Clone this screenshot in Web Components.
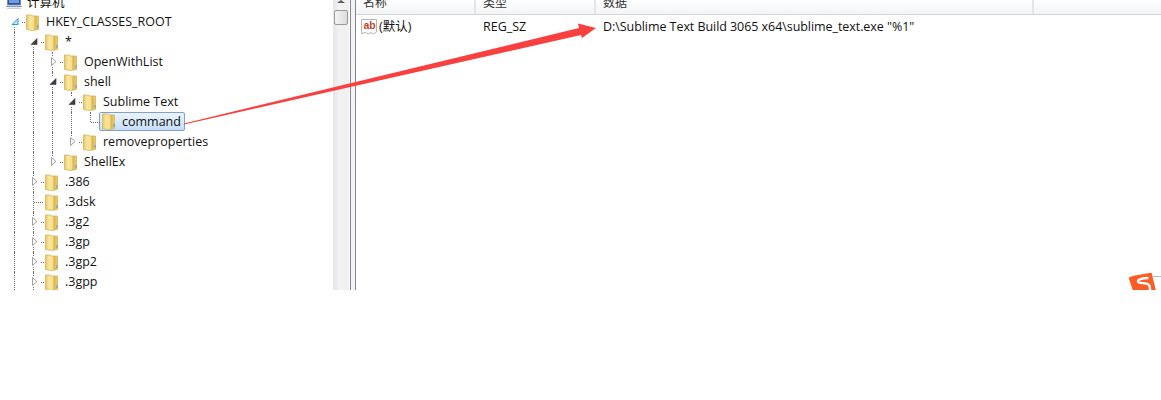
<!DOCTYPE html>
<html>
<head>
<meta charset="utf-8">
<style>
  html, body { margin: 0; padding: 0; background: #fff; }
</style>
</head>
<body>
<template id="folder-tpl">
  <svg width="13" height="17" viewBox="0 0 13 17">
    <defs>
      <linearGradient id="fg" x1="0" y1="0" x2="1" y2="0">
        <stop offset="0" stop-color="#e8c566"/>
        <stop offset="0.3" stop-color="#f8e6a0"/>
        <stop offset="0.58" stop-color="#f6e08e"/>
        <stop offset="0.72" stop-color="#dcb650"/>
        <stop offset="1" stop-color="#eccd72"/>
      </linearGradient>
    </defs>
    <path d="M.5 1h5l1 1h6v13.500l-6 1-6-1z" fill="url(#fg)" stroke="#d6b45a" stroke-width=".8"/>
    <path d="M11.500 11h1v3h-1z" fill="#4d9fd6"/>
  </svg>
</template>

<script>
const ROW_STEP = 19;

// one row of the registry tree. guides = list of levels that carry a vertical dotted line
class RegRow extends HTMLElement {
    constructor() {
        super();
        this.attachShadow({ mode: "open" });
    }

    connectedCallback() {
        const guides = (this.getAttribute("guides") || "").split(",").filter(Boolean);
        const level = Number(this.getAttribute("level") || 0);
        const exp = this.getAttribute("exp") || "none";
        const selected = this.hasAttribute("selected");
        const line = this.getAttribute("line") || "";

        let cells = "";
        for (let i = 0; i < level; i++) {
            const cls = guides.includes(String(i)) ? "cell guide" : "cell";
            cells += `<span class="${cls}"></span>`;
        }
        let mark = "";
        if (exp === "closed") {
            mark = `<svg class="tri" width="9" height="11" viewBox="0 0 9 11"><path d="M3.500 1.500l4.500 4-4.500 4z" fill="#fff" stroke="#a0a0a0"/></svg>`;
        } else if (exp === "open") {
            mark = `<svg class="tri" width="9" height="11" viewBox="0 0 9 11"><path d="M2 8.500h6V2.500z" fill="#3c3c3c" stroke="#3c3c3c" stroke-width=".6"/></svg>`;
        } else if (exp === "root") {
            mark = `<svg class="tri" width="9" height="11" viewBox="0 0 9 11"><path d="M2 8.500h6V2.500z" fill="#bfe6f8" stroke="#26a0da"/></svg>`;
        }

        this.shadowRoot.innerHTML = `
          <style>
            :host { display: flex; height: 20px; align-items: center; padding-left: 5px; white-space: nowrap; }
            .cell { position: relative; display: block; width: ${ROW_STEP}px; height: 20px; flex: none; }
            .guide::before, .stem::before, .stem-up::before {
              content: ""; position: absolute; left: 9px; width: 0;
              border-left: 1px dotted #6d6d6d;
            }
            .guide::before { top: 0; bottom: 0; }
            .stem::before { top: 0; bottom: 0; }
            .stem-up::before { top: 0; height: 10px; }
            .stem-down::before { content: ""; position: absolute; left: 9px; top: 15px; bottom: 0; border-left: 1px dotted #6d6d6d; }
            .hook-line { position: absolute; left: 10px; top: 10px; width: 9px; border-top: 1px dotted #6d6d6d; }
            .tri { position: absolute; left: 5px; top: 4px; background: #fff; }
            .tip { position: absolute; left: 17px; top: 10px; width: 3px; border-top: 1px dotted #6d6d6d; }
            .node { display: flex; align-items: center; flex: none; margin-left: 2px; height: 20px; }
            .node svg { display: block; margin-right: 7px; }
            .node.sel {
              box-sizing: border-box; height: 19px; align-self: flex-start; margin-left: -1px; padding: 0 3px 0 2px;
              border: 1px solid #7da2ce; border-radius: 2px;
              background: linear-gradient(#ebf4fd, #c6def7);
            }
            .label { color: #111; font: 12.500px/20px "Open Sans", "Noto Sans CJK SC", sans-serif; }
          </style>
          ${cells}
          <span class="cell ${line}">
            ${exp === "none" ? "" : mark + '<span class="tip"></span>'}
            ${this.hasAttribute("hook") ? '<span class="hook-line"></span>' : ""}
          </span>
          <span class="node ${selected ? "sel" : ""}">
            <span class="ico"></span>
            <span class="label"><slot></slot></span>
          </span>
        `;
        const ico = this.shadowRoot.querySelector(".ico");
        ico.appendChild(document.getElementById("folder-tpl").content.cloneNode(true));
    }
}

class RegTree extends HTMLElement {
    constructor() {
        super();
        this.attachShadow({ mode: "open" }).innerHTML = `
          <style>
            :host { display: block; width: 333px; flex: none; overflow: hidden; height: 290px; }
            .inner { margin-top: -8px; }
            .pc { display: flex; align-items: center; height: 20px; padding-left: 6px; gap: 5px;
                  font: 12.500px/20px "Noto Sans CJK SC", sans-serif; color: #111; }
          </style>
          <div class="inner">
            <div class="pc">
              <svg width="16" height="16" viewBox="0 0 16 16"><rect x="1.500" y="0" width="13" height="11" fill="#2c4f9e" stroke="#7f8c9c"/><rect x="3" y="2" width="10" height="7" fill="#6f9be0"/><path d="M0 12h16v1H0z" fill="#8aa0b8"/><path d="M1 13.500h14v1.500H1z" fill="#c6d2de"/></svg>
              <span>计算机</span>
            </div>
            <slot></slot>
          </div>
        `;
    }
}

class ScrollTrack extends HTMLElement {
    constructor() {
        super();
        this.attachShadow({ mode: "open" }).innerHTML = `
          <style>
            :host { display: block; width: 16px; flex: none; height: 290px; background: linear-gradient(90deg, #e6e6e6, #f2f2f2 40%, #f0f0f0); position: relative; }
            .thumb { position: absolute; left: 1px; right: 1px; top: 10px; height: 15px; box-sizing: border-box;
                     border: 1px solid #9a9a9a; border-radius: 2px; background: linear-gradient(90deg, #f3f3f3, #dcdcdc); }
            .up { position: absolute; left: 4px; top: 0; width: 0; height: 0; border: 4px solid transparent; border-top: 0; border-bottom: 3px solid #5a5a5a; }
          </style>
          <div class="up"></div>
          <div class="thumb"></div>
        `;
    }
}

class SplitBar extends HTMLElement {
    constructor() {
        super();
        this.attachShadow({ mode: "open" }).innerHTML = `
          <style>
            :host { display: block; width: 6px; flex: none; height: 290px; box-sizing: border-box; margin-left: 1px;
                    border-left: 1px solid #828790; border-right: 1px solid #828790; background: #f4f4f4; }
          </style>
        `;
    }
}

class HeadCell extends HTMLElement {
    constructor() {
        super();
        this.attachShadow({ mode: "open" }).innerHTML = `
          <style>
            :host { display: block; box-sizing: border-box; height: 14px; flex: none; overflow: hidden; padding-left: 7px;
                    border-right: 2px solid #e3e5e8; width: var(--w, auto);
                    font: 12px/12px "Noto Sans CJK SC", sans-serif; color: #333; }
            span { display: block; margin-top: -4px; }
          </style>
          <span><slot></slot></span>
        `;
    }
}

class ValueList extends HTMLElement {
    constructor() {
        super();
        this.attachShadow({ mode: "open" }).innerHTML = `
          <style>
            :host { display: block; flex: 1; height: 290px; overflow: hidden; background: #fff; }
            .head { display: flex; background: linear-gradient(#fff, #f3f4f6); border-bottom: 1px solid #d5d5d5; height: 14px; }
            .row { display: flex; align-items: center; height: 22px; margin-top: 1px;
                   font: 12.500px/20px "Open Sans", "Noto Sans CJK SC", sans-serif; color: #111; white-space: nowrap; }
            .name { display: flex; align-items: center; width: 127px; padding-left: 5px; box-sizing: border-box; flex: none; }
            .type { width: 120px; flex: none; }
            .data { letter-spacing: -0.06px; }
          </style>
          <div class="head">
            <head-cell style="--w:120px">名称</head-cell>
            <head-cell style="--w:120px">类型</head-cell>
            <head-cell style="--w:438px">数据</head-cell>
          </div>
          <div class="row">
            <span class="name">
              <svg width="18" height="18" viewBox="0 0 18 18"><path d="M.5 1.500h15v12.500l-3 2-2.500-1.500-3 1.500-2.500-1.500-4 1z" fill="#fff" stroke="#b4b4b4"/><text x="2.500" y="11" font-family="Liberation Sans" font-weight="700" font-size="10.500" fill="#c8412b">ab</text></svg>
              <span>(默认)</span>
            </span>
            <span class="type">REG_SZ</span>
            <span class="data">D:\\Sublime Text Build 3065 x64\\sublime_text.exe "%1"</span>
          </div>
        `;
    }
}

class RedArrow extends HTMLElement {
    constructor() {
        super();
        this.attachShadow({ mode: "open" }).innerHTML = `
          <style>
            :host { position: absolute; left: 0; top: 0; pointer-events: none; }
            svg { display: block; }
          </style>
          <svg width="1161" height="290" viewBox="0 0 1161 290">
            <path d="M184 123.500L579 28 578 23.500 596 28 582 38 581 35 184 124.500z" fill="#f9403f"/>
          </svg>
        `;
    }
}

class ImeBadge extends HTMLElement {
    constructor() {
        super();
        this.attachShadow({ mode: "open" }).innerHTML = `
          <style>
            :host { position: absolute; left: 1126px; top: 270px; height: 20px; width: 35px; overflow: hidden; }
            svg { display: block; }
          </style>
          <svg width="35" height="20" viewBox="0 0 35 20">
            <path d="M8 6.500L3.500 8 7.500 20H29L25 3.500z" fill="#fb5c26" stroke="#fb5c26" stroke-width="1.500" stroke-linejoin="round"/>
            <path d="M22.500 8c-5 .2-11 .8-10.500 3.500.5 2.300 7.500 1 10.500 3 1.500 1 1.500 3 1.500 5.500" fill="none" stroke="#fff" stroke-width="2.400"/>
            <path d="M27 6.500h8" stroke="#a9bdd0" stroke-width="1"/>
          </svg>
        `;
    }
}

class RegWindow extends HTMLElement {
    constructor() {
        super();
        this.attachShadow({ mode: "open" }).innerHTML = `
          <style>
            :host { display: flex; position: relative; width: 1161px; height: 400px; align-items: flex-start; background: #fff; overflow: hidden; }
          </style>
          <slot></slot>
        `;
    }
}

customElements.define("reg-row", RegRow);
customElements.define("reg-tree", RegTree);
customElements.define("scroll-track", ScrollTrack);
customElements.define("split-bar", SplitBar);
customElements.define("head-cell", HeadCell);
customElements.define("value-list", ValueList);
customElements.define("red-arrow", RedArrow);
customElements.define("ime-badge", ImeBadge);
customElements.define("reg-window", RegWindow);
</script>

<reg-window>
  <reg-tree>
    <reg-row level="0" exp="root" line="stem-down">HKEY_CLASSES_ROOT</reg-row>
    <reg-row level="1" guides="0" exp="open" line="stem-down">*</reg-row>
    <reg-row level="2" guides="0,1" exp="closed" line="stem">OpenWithList</reg-row>
    <reg-row level="2" guides="0,1" exp="open" line="stem">shell</reg-row>
    <reg-row level="3" guides="0,1,2" exp="open" line="stem">Sublime Text</reg-row>
    <reg-row level="4" guides="0,1,2,3" exp="none" line="stem-up" hook selected>command</reg-row>
    <reg-row level="3" guides="0,1,2" exp="closed" line="stem-up">removeproperties</reg-row>
    <reg-row level="2" guides="0,1" exp="closed" line="stem-up">ShellEx</reg-row>
    <reg-row level="1" guides="0" exp="closed" line="stem">.386</reg-row>
    <reg-row level="1" guides="0" exp="none" line="stem" hook>.3dsk</reg-row>
    <reg-row level="1" guides="0" exp="closed" line="stem">.3g2</reg-row>
    <reg-row level="1" guides="0" exp="closed" line="stem">.3gp</reg-row>
    <reg-row level="1" guides="0" exp="closed" line="stem">.3gp2</reg-row>
    <reg-row level="1" guides="0" exp="closed" line="stem">.3gpp</reg-row>
  </reg-tree>
  <scroll-track></scroll-track>
  <split-bar></split-bar>
  <value-list></value-list>
  <red-arrow></red-arrow>
  <ime-badge></ime-badge>
</reg-window>
</body>
</html>
